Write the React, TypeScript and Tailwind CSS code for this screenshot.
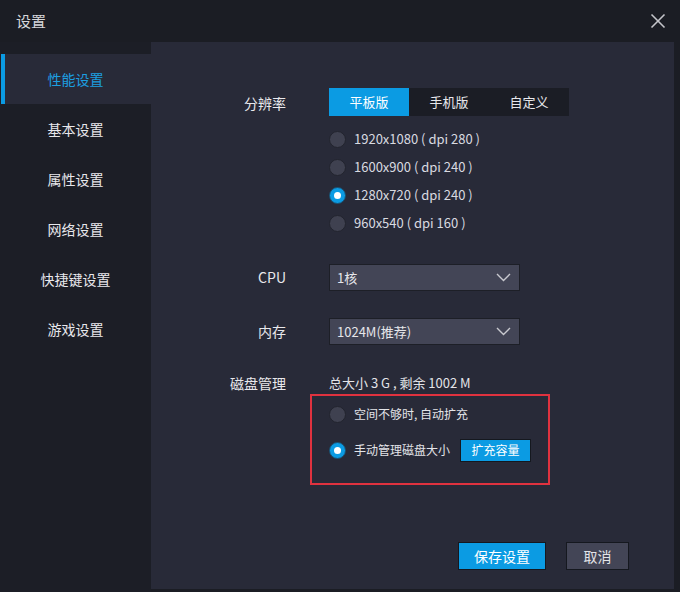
import React from 'react';

const FONT = { fontFamily: '"Microsoft YaHei", "Noto Sans CJK SC", "Noto Sans", sans-serif' };

const menu = ['性能设置', '基本设置', '属性设置', '网络设置', '快捷键设置', '游戏设置'];

const resolutions = [
  { label: '1920x1080 ( dpi 280 )', checked: false },
  { label: '1600x900 ( dpi 240 )', checked: false },
  { label: '1280x720 ( dpi 240 )', checked: true },
  { label: '960x540 ( dpi 160 )', checked: false },
];

function Radio({ checked }: { checked: boolean }) {
  if (checked) {
    return (
      <span className="w-[17px] h-[17px] rounded-full bg-[#0b9be3] border border-[#1a4f70] flex items-center justify-center shrink-0">
        <span className="w-[7px] h-[7px] rounded-full bg-white" />
      </span>
    );
  }
  return <span className="w-[17px] h-[17px] rounded-full bg-[#3f4150] border border-[#22242e] shrink-0" />;
}

function Select({ value }: { value: string }) {
  return (
    <div className="w-[191px] h-[27px] bg-[#434556] border border-[#1d1f27] flex items-center justify-between pl-[7px] pr-[8px] text-[13px] text-[#e6e6ea]">
      <span>{value}</span>
      <svg width="15" height="9" viewBox="0 0 15 9" fill="none">
        <polyline points="1,1 7.5,7.5 14,1" stroke="#c8c9cf" strokeWidth="1.4" />
      </svg>
    </div>
  );
}

export default function App() {
  return (
    <div className="w-[680px] h-[592px] bg-[#1b1d24] flex flex-col select-none" style={FONT}>
      <div className="h-[42px] flex items-center justify-between pl-[16px] pr-[14px] shrink-0">
        <span className="text-[15px] text-[#d6d7db]">设置</span>
        <svg width="16" height="16" viewBox="0 0 16 16" fill="none">
          <line x1="1.5" y1="1.5" x2="14.5" y2="14.5" stroke="#c4c5ca" strokeWidth="1.6" />
          <line x1="14.5" y1="1.5" x2="1.5" y2="14.5" stroke="#c4c5ca" strokeWidth="1.6" />
        </svg>
      </div>

      <div className="flex flex-1 min-h-0">
        <div className="w-[151px] shrink-0 pt-[12px] bg-[#1c1e26]">
          {menu.map((item, i) => (
            <div
              key={item}
              className={
                i === 0
                  ? 'h-[50px] flex items-center justify-center text-[14px] text-[#1c9fe0] bg-[#282a38] ml-[1px] border-l-4 border-[#0b9be3] pr-[5px]'
                  : 'h-[50px] flex items-center justify-center text-[14px] text-[#e8e8ec]'
              }
            >
              {item}
            </div>
          ))}
        </div>

        <div className="flex-1 bg-[#282a38] mr-[6px] mb-[3px] flex flex-col text-[#e8e8ec]">
          <div className="flex items-center mt-[46px]">
            <div className="w-[135px] text-right text-[14px] self-start pt-[5px]">分辨率</div>
            <div className="ml-[43px] flex h-[28px] bg-[#1b1d25] text-[13px]">
              <div className="w-[80px] bg-[#0b9be3] text-white flex items-center justify-center">平板版</div>
              <div className="w-[80px] flex items-center justify-center">手机版</div>
              <div className="w-[80px] flex items-center justify-center">自定义</div>
            </div>
          </div>

          <div className="ml-[178px] mt-[9px] flex flex-col">
            {resolutions.map((r) => (
              <div key={r.label} className="h-[28px] flex items-center gap-[8px] text-[13px] text-[#d9dae0]">
                <Radio checked={r.checked} />
                <span>{r.label}</span>
              </div>
            ))}
          </div>

          <div className="flex items-center mt-[27px]">
            <div className="w-[135px] text-right text-[14px]">CPU</div>
            <div className="ml-[43px]">
              <Select value="1核" />
            </div>
          </div>

          <div className="flex items-center mt-[27px]">
            <div className="w-[135px] text-right text-[14px]">内存</div>
            <div className="ml-[43px]">
              <Select value="1024M(推荐)" />
            </div>
          </div>

          <div className="flex items-center mt-[28px] h-[20px]">
            <div className="w-[135px] text-right text-[14px]">磁盘管理</div>
            <div className="ml-[43px] text-[13px] text-[#e3e4e8]">总大小 3 G , 剩余 1002 M</div>
          </div>

          <div className="ml-[159px] mt-[1px] w-[240px] h-[91px] border-2 border-[#e0323f] pl-[17px] pt-[5px] flex flex-col">
            <div className="h-[26px] flex items-center gap-[8px] text-[12px] text-[#e3e4e8]">
              <Radio checked={false} />
              <span>空间不够时, 自动扩充</span>
            </div>
            <div className="h-[26px] mt-[10px] flex items-center gap-[8px] text-[12px] text-[#e3e4e8]">
              <Radio checked={true} />
              <span>手动管理磁盘大小</span>
              <span className="ml-[2px] w-[71px] h-[23px] bg-[#0b9be3] border border-[#15181f] text-white flex items-center justify-center text-[12px]">
                扩充容量
              </span>
            </div>
          </div>

          <div className="mt-auto mb-[19px] mr-[45px] flex justify-end gap-[20px]">
            <button className="w-[88px] h-[28px] bg-[#0b9be3] border border-[#15181f] text-white text-[14px]">保存设置</button>
            <button className="w-[63px] h-[28px] bg-[#434556] border border-[#15181f] text-[#e3e4e8] text-[14px]">取消</button>
          </div>
        </div>
      </div>
    </div>
  );
}
